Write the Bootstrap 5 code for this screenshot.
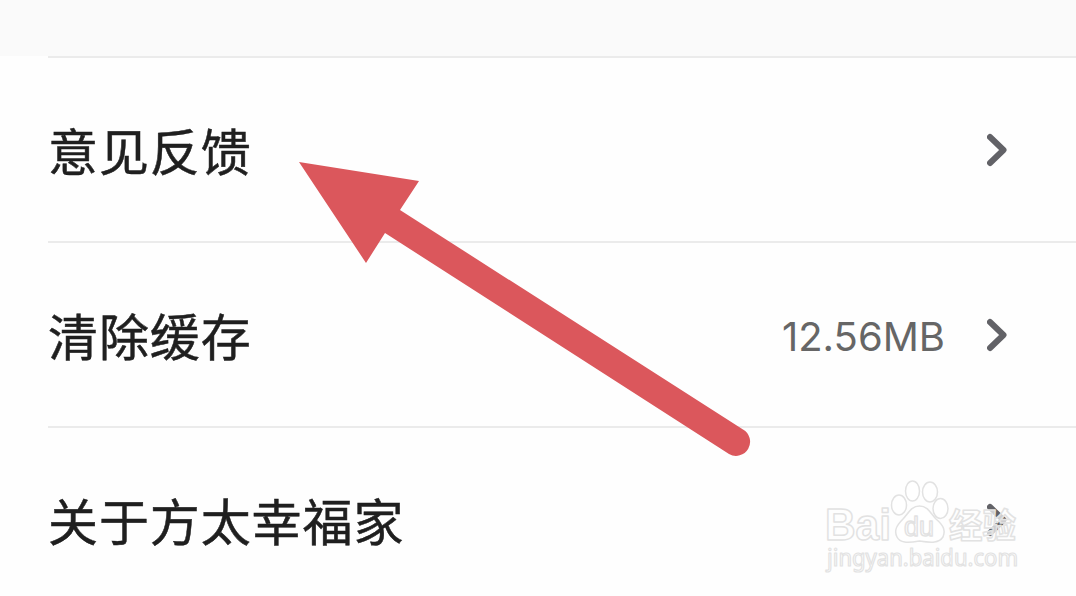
<!DOCTYPE html>
<html lang="zh-CN">
<head>
    <meta charset="UTF-8">
    <meta name="viewport" content="width=device-width, initial-scale=1.0">
    <title>设置</title>
    <link href="https://cdn.jsdelivr.net/npm/bootstrap@5.3.0/dist/css/bootstrap.min.css" rel="stylesheet">
    <style>
        body {
            height: 596px;
            background: #fefefe;
            font-family: "Noto Sans CJK SC", sans-serif;
        }
        .top-strip {
            height: 56px;
            background: #fafafa;
        }
        .settings {
            margin-left: 48px;
        }
        .setting-row {
            height: 185.2px;
            padding-right: 67px;
            border-top: 2px solid #ebebeb;
            color: #1f1f1f;
        }
        .setting-name {
            font-size: 50px;
            line-height: 60px;
            letter-spacing: 0.9px;
            padding-bottom: 2px;
            -webkit-text-stroke: 0.5px #1f1f1f;
        }
        .setting-value {
            font-family: Inter, sans-serif;
            font-size: 40px;
            line-height: 48px;
            color: #666;
            padding-top: 4px;
            margin-right: 42px;
        }
        .chevron {
            width: 22px;
            height: 34px;
        }
    </style>
</head>
<body class="position-relative overflow-hidden">
    <div class="top-strip"></div>
    <div class="settings">
        <div class="setting-row d-flex align-items-center">
            <span class="setting-name">意见反馈</span>
            <svg class="chevron ms-auto" viewBox="0 0 22 34"><path d="M3 4 16.5 17 3 30" fill="none" stroke="#626267" stroke-width="6" stroke-linecap="round" stroke-linejoin="round"/></svg>
        </div>
        <div class="setting-row d-flex align-items-center">
            <span class="setting-name">清除缓存</span>
            <span class="setting-value ms-auto">12.56MB</span>
            <svg class="chevron" viewBox="0 0 22 34"><path d="M3 4 16.5 17 3 30" fill="none" stroke="#626267" stroke-width="6" stroke-linecap="round" stroke-linejoin="round"/></svg>
        </div>
        <div class="setting-row d-flex align-items-center">
            <span class="setting-name">关于方太幸福家</span>
            <svg class="chevron ms-auto" viewBox="0 0 22 34"><path d="M3 4 16.5 17 3 30" fill="none" stroke="#626267" stroke-width="6" stroke-linecap="round" stroke-linejoin="round"/></svg>
        </div>
    </div>

    <!-- pointer arrow and watermark lie over the list -->
    <svg class="position-absolute top-0 start-0" width="1076" height="596" viewBox="0 0 1076 596">
        <path d="M299 162 419 181 400 210 743 429.5A14 14 0 0 1 729 454L385 233 366 263Z" fill="#db575c"/>
        <g fill="#fff" fill-opacity=".7" stroke="#e2e2e2" stroke-width="1.5" stroke-linejoin="round" font-family="'Liberation Sans', sans-serif">
            <text x="825" y="540" font-size="44" font-weight="700" textLength="66" lengthAdjust="spacingAndGlyphs">Bai</text>
            <ellipse cx="899" cy="505" rx="7.5" ry="10"/>
            <ellipse cx="912.5" cy="491" rx="7" ry="10"/>
            <ellipse cx="930" cy="492" rx="7.5" ry="10"/>
            <ellipse cx="940.5" cy="508.5" rx="7.5" ry="10"/>
            <path d="M919.5 506C911 506 908 514 903 519C896 526 894 531 897 537C900 543 907 543 919.5 541C932 543 939 543 943 537C946 530 943 525 936 519C931 514 928 506 919.5 506Z"/>
            <text x="904" y="536" font-size="28" textLength="30" lengthAdjust="spacingAndGlyphs">du</text>
            <text x="949" y="538" font-size="34" font-weight="700" font-family="'Noto Sans CJK SC', sans-serif" textLength="67" lengthAdjust="spacingAndGlyphs">经验</text>
            <text x="827" y="566" font-size="23" stroke-width="1.2" font-family="'Noto Sans', sans-serif" textLength="191" lengthAdjust="spacingAndGlyphs">jingyan.baidu.com</text>
        </g>
    </svg>

    <script src="https://cdn.jsdelivr.net/npm/bootstrap@5.3.0/dist/js/bootstrap.bundle.min.js"></script>
</body>
</html>
